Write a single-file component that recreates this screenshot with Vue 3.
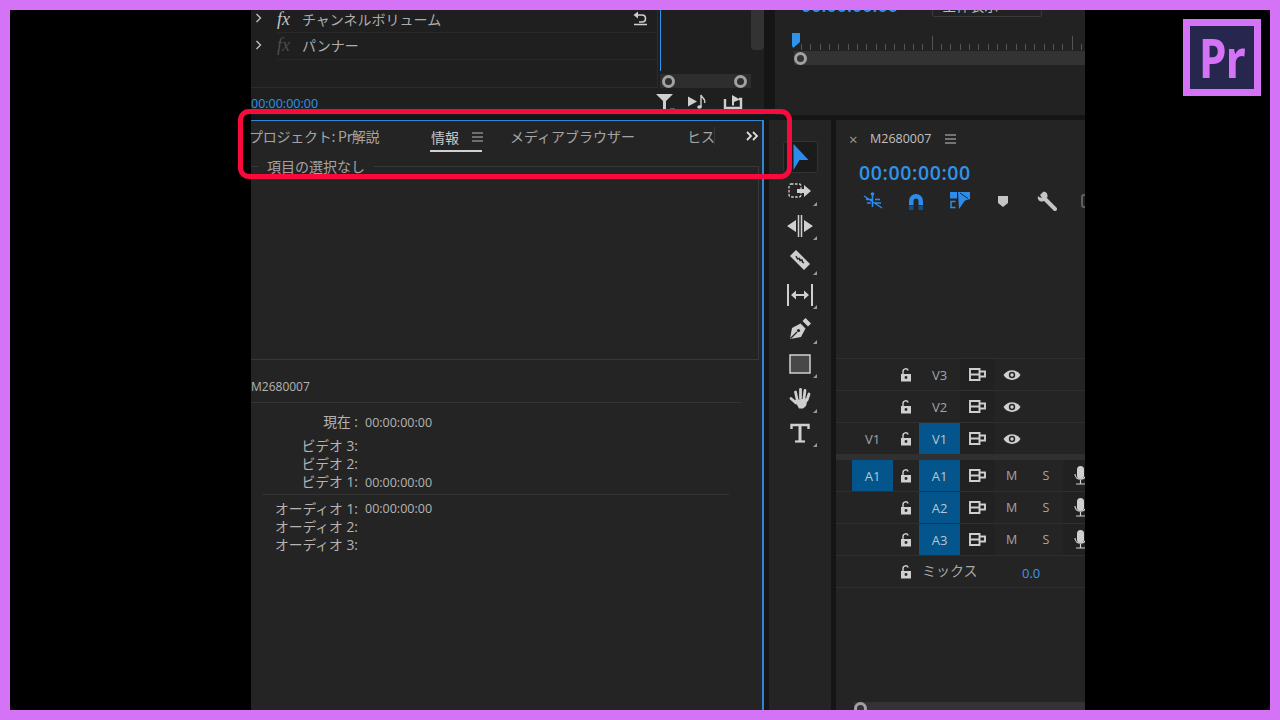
<script setup>
const fxRows = [
  { label: 'チャンネルボリューム', dim: false, reset: true },
  { label: 'パンナー', dim: true, reset: false }
]

const videoInfo = [
  { label: 'ビデオ 3:', value: '' },
  { label: 'ビデオ 2:', value: '' },
  { label: 'ビデオ 1:', value: '00:00:00:00' }
]

const audioInfo = [
  { label: 'オーディオ 1:', value: '00:00:00:00' },
  { label: 'オーディオ 2:', value: '' },
  { label: 'オーディオ 3:', value: '' }
]

const videoTracks = [
  { name: 'V3', src: '', on: false },
  { name: 'V2', src: '', on: false },
  { name: 'V1', src: 'V1', on: true }
]

const audioTracks = [
  { name: 'A1', src: 'A1', on: true },
  { name: 'A2', src: '', on: true },
  { name: 'A3', src: '', on: true }
]

const ticks = Array.from({ length: 31 }, (_, i) => i)
</script>

<template>
  <div class="frame">
    <div class="app">
      <div class="top">
        <section class="effects">
          <div class="fx-area">
            <div class="fx-list">
              <div v-for="row in fxRows" :key="row.label" class="fx-row">
                <svg class="chev" width="8" height="10" viewBox="0 0 8 10"><path d="M1.5 1l4 4-4 4" fill="none" stroke="#c4c4c4" stroke-width="1.3"/></svg>
                <span :class="['fx', { dim: row.dim }]">fx</span>
                <span class="fx-name">{{ row.label }}</span>
                <svg v-if="row.reset" class="reset" width="18" height="16" viewBox="0 0 18 16"><path d="M7 1.5L2.5 5 7 8.5z" fill="#cfcfcf"/><path d="M7 5h4c2.5 0 3.5 1.5 3.5 3.5S13 12 11 12H8" fill="none" stroke="#cfcfcf" stroke-width="1.6"/><path d="M3 14.5h13" stroke="#cfcfcf" stroke-width="1.5"/></svg>
              </div>
            </div>
            <div class="fx-graph">
              <div class="graph-body"><i class="graph-line"></i><i class="graph-scroll"></i></div>
              <div class="graph-zoom"><i class="knob"></i><i class="knob"></i></div>
            </div>
          </div>
          <div class="fx-foot">
            <span class="fx-time">00:00:00:00</span>
            <div class="foot-icons">
              <svg width="24" height="16" viewBox="0 0 24 16"><path d="M3 0h17l-7 7v8h-3V7z" fill="#cfcfcf"/><path d="M17 15h5" stroke="#9a9a9a"/></svg>
              <svg width="20" height="16" viewBox="0 0 20 16"><path d="M0 2.5l9 5-9 5z" fill="#cfcfcf"/><path d="M13 13V1c1 3.5 5 3.5 3.5 8" fill="none" stroke="#cfcfcf" stroke-width="1.4"/><ellipse cx="11.5" cy="13" rx="2.3" ry="1.8" fill="#cfcfcf"/></svg>
              <svg width="20" height="16" viewBox="0 0 20 16"><path d="M2 5v9h16V5h-2" fill="none" stroke="#cfcfcf" stroke-width="2.4"/><path d="M9 1l8 4.500-6 2.500v3.500H9z" fill="#cfcfcf"/></svg>
            </div>
          </div>
        </section>
        <section class="program">
          <div class="program-head">
            <span class="program-time">00:00:00:00</span>
            <span class="fit">全体表示</span>
          </div>
          <div class="ruler">
            <i class="playhead"></i>
            <i v-for="t in ticks" :key="t" :class="['tick', { big: t % 15 === 14 }]"></i>
          </div>
          <div class="ruler-bar"><i class="knob"></i></div>
        </section>
      </div>

      <div class="bottom">
        <section class="info-panel">
          <div class="tabs">
            <span class="tab tab-project">プロジェクト: Pr解説</span>
            <span class="tab tab-info">情報<svg class="menu" width="11" height="10" viewBox="0 0 11 10"><path d="M0 1h11M0 5h11M0 9h11" stroke="#b8b8b8"/></svg></span>
            <span class="tab tab-media">メディアブラウザー</span>
            <span class="tab tab-hist">ヒス</span>
            <svg class="more" width="14" height="10" viewBox="0 0 14 10"><path d="M2 1l4 4-4 4M8 1l4 4-4 4" fill="none" stroke="#dcdcdc" stroke-width="1.8"/></svg>
          </div>
          <fieldset class="selection"><legend>項目の選択なし</legend></fieldset>
          <div class="clip-name">M2680007</div>
          <div class="info-row now"><span>現在 :</span><span>00:00:00:00</span></div>
          <div class="info-block">
            <div v-for="row in videoInfo" :key="row.label" class="info-row"><span>{{ row.label }}</span><span>{{ row.value }}</span></div>
          </div>
          <div class="info-block audio">
            <div v-for="row in audioInfo" :key="row.label" class="info-row"><span>{{ row.label }}</span><span>{{ row.value }}</span></div>
          </div>
        </section>

        <aside class="tools">
          <div class="tool active"><svg width="18" height="27" viewBox="0 0 18 27"><path d="M2.500 0l15 16H8.500l-6 10z" fill="#2d8ceb"/></svg></div>
          <div class="tool corner"><svg width="24" height="18" viewBox="0 0 24 18"><rect x="1" y="2" width="12" height="13" rx="2" fill="none" stroke="#cfcfcf" stroke-width="1.3" stroke-dasharray="2.500 1.500"/><path d="M9 7h7V3l7 6-7 6v-4H9z" fill="#cfcfcf"/></svg></div>
          <div class="tool corner"><svg width="26" height="22" viewBox="0 0 26 22"><path d="M0 11l9-6v12zM26 11l-9-6v12z" fill="#cfcfcf"/><path d="M11.500 0v22M14.500 0v22" stroke="#cfcfcf" stroke-width="1.5"/></svg></div>
          <div class="tool corner"><svg width="20" height="20" viewBox="0 0 20 20"><path d="M0 6l6-6 14 14-6 6z" fill="#cfcfcf"/><path d="M6 6l1.500 3 2-.5.500 2 2-.5.500 2 1.500 1" fill="none" stroke="#262626" stroke-width="1.5"/></svg></div>
          <div class="tool corner"><svg width="28" height="22" viewBox="0 0 28 22"><path d="M2 0v22M26 0v22" stroke="#cfcfcf" stroke-width="2"/><path d="M5 11l5-4.500V10h8V6.500l5 4.500-5 4.500V12h-8v3.500z" fill="#cfcfcf"/></svg></div>
          <div class="tool corner"><svg width="22" height="22" viewBox="0 0 22 22"><path d="M13.500 3l3-3 5.500 5.500-3 3z" fill="#cfcfcf"/><path d="M1 21l2-11 8.500-4.500 5 5L12 19z" fill="#cfcfcf"/><path d="M1.500 20.500L8 14" stroke="#262626" stroke-width="1.3"/><circle cx="9.500" cy="12.500" r="1.600" fill="#262626"/></svg></div>
          <div class="tool corner"><svg width="22" height="20" viewBox="0 0 22 20"><rect x="1" y="1" width="20" height="18" fill="#484848" stroke="#cfcfcf" stroke-width="1.500"/></svg></div>
          <div class="tool corner"><svg width="22" height="22" viewBox="0 0 22 22"><g fill="none" stroke="#cfcfcf" stroke-width="2.800" stroke-linecap="round"><path d="M8 12L6.500 5M11.500 11V2.500M15 11l1-7.500M18 13l2-6M7 16L2 11.500"/></g><path d="M5.500 13L19 11l-2 8-3 2.500H10z" fill="#cfcfcf"/></svg></div>
          <div class="tool corner"><svg width="20" height="20" viewBox="0 0 20 20"><path d="M1.500 6V2h17v4" fill="none" stroke="#cfcfcf" stroke-width="2.400"/><path d="M10 2v16" stroke="#cfcfcf" stroke-width="3"/><path d="M5 18.500h10" stroke="#cfcfcf" stroke-width="2.200"/></svg></div>
        </aside>

        <section class="timeline">
          <div class="seq-tab">
            <span class="close">×</span>
            <span class="seq-name">M2680007</span>
            <svg width="11" height="10" viewBox="0 0 11 10"><path d="M0 1h11M0 5h11M0 9h11" stroke="#c4c4c4" stroke-width="1.2"/></svg>
          </div>
          <div class="seq-time">00:00:00:00</div>
          <div class="seq-tools">
            <svg width="20" height="18" viewBox="0 0 20 18"><circle cx="9.500" cy="2" r="1.800" fill="#2d8ceb"/><path d="M9.500 3v12M3 7.500h6M12 7.500h5M4 11h4M12 11h6M1 4l18 12" stroke="#2d8ceb" stroke-width="1.500"/></svg>
            <svg width="16" height="17" viewBox="0 0 16 17"><path d="M1 12V8a7 7 0 0 1 14 0v4h-4.500V8a2.500 2.500 0 0 0-5 0v4z" fill="#2d8ceb"/><path d="M1 12.500h4.500V17H1zM10.500 12.500H15V17h-4.500z" fill="#14507f"/></svg>
            <svg width="20" height="18" viewBox="0 0 20 18"><path d="M0 0h7v6.500H0z" fill="#2d8ceb"/><path d="M5.500 9.500H1v6h4.500" fill="none" stroke="#2d8ceb" stroke-width="1.500"/><path d="M8 0h12v7l-5 1.500L9 17z" fill="#2d8ceb"/><path d="M10 1l8 5.500" stroke="#242424"/></svg>
            <svg width="12" height="13" viewBox="0 0 12 13"><path d="M1 1h10v7l-5 4-5-4z" fill="#c4c4c4"/></svg>
            <svg width="20" height="20" viewBox="0 0 20 20"><path d="M7 7l11 11" stroke="#c4c4c4" stroke-width="4" stroke-linecap="round"/><path d="M6 1L3 4l2 3-3-1-1-1C0 9 3 11 6 10.500L10.500 6C11 3 9 0 6 1z" fill="#c4c4c4"/></svg>
            <svg width="18" height="14" viewBox="0 0 18 14"><rect x="1" y="1" width="16" height="12" rx="2" fill="none" stroke="#5e5e5e" stroke-width="2"/></svg>
          </div>
          <div class="tracks">
            <div v-for="t in videoTracks" :key="t.name" class="track">
              <span class="src">{{ t.src }}</span>
              <svg class="lock" width="14" height="14" viewBox="0 0 14 14"><path d="M4 6V3.500a2.700 2.700 0 0 1 5.200-1" fill="none" stroke="#cfcfcf" stroke-width="1.400"/><path d="M2 6h10v7.500H2z" fill="#cfcfcf"/><circle cx="7" cy="9.500" r="1.400" fill="#262626"/></svg>
              <span :class="['name', { lit: t.on }]">{{ t.name }}</span>
              <span class="cell sync"><svg width="17" height="13" viewBox="0 0 17 13"><path d="M1 1h9.500v11H1zM1 6.500h9.500M10.500 3.500H16v5h-5.500z" fill="none" stroke="#cfcfcf" stroke-width="1.900"/></svg></span>
              <span class="cell eye"><svg width="18" height="12" viewBox="0 0 18 12"><path d="M0.500 6c4-6.500 13-6.500 17 0-4 6.500-13 6.500-17 0z" fill="#cfcfcf"/><circle cx="9" cy="6" r="3.200" fill="#262626"/><circle cx="9" cy="6" r="1.700" fill="#cfcfcf"/></svg></span>
            </div>
            <div class="track-gap"></div>
            <div v-for="t in audioTracks" :key="t.name" class="track">
              <span :class="['src', { lit: t.src }]">{{ t.src }}</span>
              <svg class="lock" width="14" height="14" viewBox="0 0 14 14"><path d="M4 6V3.500a2.700 2.700 0 0 1 5.200-1" fill="none" stroke="#cfcfcf" stroke-width="1.400"/><path d="M2 6h10v7.500H2z" fill="#cfcfcf"/><circle cx="7" cy="9.500" r="1.400" fill="#262626"/></svg>
              <span :class="['name', { lit: t.on }]">{{ t.name }}</span>
              <span class="cell sync"><svg width="17" height="13" viewBox="0 0 17 13"><path d="M1 1h9.500v11H1zM1 6.500h9.500M10.500 3.500H16v5h-5.500z" fill="none" stroke="#cfcfcf" stroke-width="1.900"/></svg></span>
              <span class="cell eye letter">M</span>
              <span class="cell letter solo">S</span>
              <span class="cell mic"><svg width="13" height="19" viewBox="0 0 13 19"><rect x="3" y="0" width="7" height="13" rx="3.500" fill="#cfcfcf"/><path d="M1 8c0 7 11 7 11 0M6.500 14v4M2 18h9" fill="none" stroke="#cfcfcf" stroke-width="1.200"/></svg></span>
            </div>
            <div class="track mix">
              <span class="src"></span>
              <svg class="lock" width="14" height="14" viewBox="0 0 14 14"><path d="M4 6V3.500a2.700 2.700 0 0 1 5.200-1" fill="none" stroke="#cfcfcf" stroke-width="1.400"/><path d="M2 6h10v7.500H2z" fill="#cfcfcf"/><circle cx="7" cy="9.500" r="1.400" fill="#262626"/></svg>
              <span class="mix-name">ミックス</span>
              <span class="mix-value">0.0</span>
            </div>
          </div>
          <div class="seq-scroll"><i class="knob"></i></div>
        </section>
      </div>
    </div>

    <div class="highlight"></div>

    <div class="logo"><span>Pr</span></div>
  </div>
</template>

<style>
html, body {
  margin: 0;
  background: #000;
}
</style>

<style scoped>
.frame {
  position: relative;
  width: 1280px;
  height: 720px;
  box-sizing: border-box;
  border: 10px solid #d473f6;
  background: #000;
  overflow: hidden;
  font-family: "Open Sans", "Noto Sans CJK JP", sans-serif;
  color: #b4b4b4;
}

.app {
  width: 834px;
  height: 700px;
  margin-left: 241px;
  display: flex;
  flex-direction: column;
  gap: 5px;
  background: #151515;
}

.top {
  height: 105px;
  display: flex;
  flex: none;
  gap: 11px;
}

.effects {
  width: 513px;
  flex: none;
  background: #1f1f1f;
}

.fx-area {
  height: 78px;
  display: flex;
}

.fx-list {
  width: 406px;
  flex: none;
  border-right: 1px solid #2c2c2c;
  border-bottom: 1px solid #2c2c2c;
}

.fx-row {
  display: flex;
  align-items: center;
  box-sizing: border-box;
  height: 27px;
  padding-bottom: 2px;
  border-bottom: 1px solid #282828;
  margin-left: 26px;
  position: relative;
  font-family: "Noto Sans CJK JP", sans-serif;
  font-size: 14px;
  color: #adadad;
}

.fx-row:first-child {
  height: 23px;
  padding-bottom: 4px;
}

.chev {
  position: absolute;
  left: -22px;
  top: 7px;
}

.fx-row:first-child .chev {
  top: 3px;
}

.fx {
  width: 25px;
  font-family: "Liberation Serif", serif;
  font-style: italic;
  font-size: 18px;
  color: #c4c4c4;
}

.fx.dim {
  color: #4c4c4c;
}

.reset {
  position: absolute;
  left: 354px;
  top: 0;
}

.fx-graph {
  flex: 1;
  display: flex;
  flex-direction: column;
}

.graph-body {
  flex: 1;
  display: flex;
  justify-content: space-between;
  padding-left: 2px;
}

.graph-line {
  width: 1px;
  height: 61px;
  background: #2f93ea;
}

.graph-scroll {
  width: 13px;
  height: 40px;
  border-radius: 0 0 4px 4px;
  background: #333;
}

.graph-zoom {
  height: 14px;
  margin-right: 13px;
  margin-left: 2px;
  display: flex;
  justify-content: space-between;
  align-items: center;
  padding: 0 4px 0 2px;
  background: #2e2e2e;
}

.knob {
  display: block;
  box-sizing: border-box;
  width: 13px;
  height: 13px;
  border: 3px solid #a2a2a2;
  border-radius: 50%;
}

.fx-foot {
  height: 27px;
  display: flex;
  align-items: center;
  justify-content: space-between;
  padding-right: 21px;
}

.fx-time {
  font-size: 12.5px;
  color: #2f93ea;
  margin-top: 3px;
}

.foot-icons {
  display: flex;
  gap: 15px;
}

.foot-icons svg:first-child {
  margin-right: -4px;
}

.program {
  flex: 1;
  background: #222;
  overflow: hidden;
}

.program-head {
  height: 23px;
  margin-top: -16px;
  display: flex;
  align-items: flex-end;
  gap: 34px;
  padding-left: 26px;
}

.program-time {
  font-size: 18px;
  font-weight: 600;
  line-height: 23px;
  color: #2f93ea;
}

.fit {
  width: 110px;
  height: 23px;
  box-sizing: border-box;
  padding-left: 9px;
  border: 1px solid #3a3a3a;
  border-radius: 2px;
  font-family: "Noto Sans CJK JP", sans-serif;
  font-size: 14px;
  line-height: 21px;
  color: #bcbcbc;
}

.ruler {
  height: 34px;
  padding: 0 0 1px 26px;
  box-sizing: border-box;
  display: flex;
  align-items: flex-end;
  gap: 8.33px;
  position: relative;
}

.playhead {
  position: absolute;
  left: 17px;
  top: 16px;
  width: 8px;
  height: 15px;
  background: #2f93ea;
  clip-path: polygon(0 0, 100% 0, 100% 60%, 15% 100%, 0 85%);
}

.tick {
  width: 1px;
  height: 6px;
  flex: none;
  background: #555;
}

.tick.big {
  height: 14px;
}

.ruler-bar {
  height: 14px;
  margin-left: 19px;
  display: flex;
  align-items: center;
  background: #333;
}

.bottom {
  flex: 1;
  min-height: 0;
  display: flex;
  gap: 5px;
}

.info-panel {
  position: relative;
  width: 513px;
  flex: none;
  box-sizing: border-box;
  border-top: 1px solid #2f86d8;
  border-right: 2px solid #2f86d8;
  background: #242424;
  font-size: 12.5px;
}

.tabs {
  height: 33px;
  box-sizing: border-box;
  padding-bottom: 4px;
  display: flex;
  align-items: center;
  font-family: "Noto Sans CJK JP", sans-serif;
  font-size: 14px;
  color: #a4a4a4;
  position: relative;
}

.tab {
  flex: none;
  white-space: nowrap;
}

.tab-project {
  width: 182px;
  margin-left: -2px;
  letter-spacing: -0.25px;
}

.tab-info {
  width: 79px;
  height: 33px;
  box-sizing: border-box;
  padding-bottom: 1px;
  align-self: flex-start;
  color: #c8c8c8;
  display: flex;
  align-items: center;
  gap: 13px;
  position: relative;
}

.tab-info::after {
  content: "";
  position: absolute;
  left: -1px;
  width: 52px;
  bottom: 2px;
  height: 2px;
  background: #d0d0d0;
}

.tab-media {
  width: 177px;
}

.tab-hist {
  position: relative;
  width: 58px;
}

.tab-hist::after {
  content: "";
  position: absolute;
  left: 27px;
  top: 1px;
  width: 1px;
  height: 18px;
  background: #383838;
}

.more {
  flex: none;
}

.selection {
  box-sizing: border-box;
  width: 508px;
  height: 202px;
  margin: 4px 0 0;
  padding: 0;
  border: 1px solid #383838;
  border-left: 0;
  font-family: "Noto Sans CJK JP", sans-serif;
  font-size: 14px;
}

.selection legend {
  margin-left: 7px;
  padding: 0 9px;
  line-height: 16px;
  color: #a4a4a4;
}

.clip-name {
  width: 491px;
  height: 33px;
  margin-top: 10px;
  line-height: 34px;
  font-size: 12px;
  box-sizing: border-box;
  border-bottom: 1px solid #333;
}

.info-row {
  display: grid;
  grid-template-columns: 107px 1fr;
  column-gap: 7px;
  height: 18px;
  line-height: 18px;
}

.info-row span:first-child {
  margin-top: -1px;
  text-align: right;
  font-size: 13.8px;
  white-space: nowrap;
}

.info-row.now {
  margin-top: 11px;
}

.info-block {
  margin-top: 6px;
}

.info-block.audio {
  width: 467px;
  margin-left: 11px;
  margin-top: 2px;
  padding-top: 5px;
  border-top: 1px solid #333;
}

.info-block.audio .info-row {
  grid-template-columns: 96px 1fr;
}

.info-block.audio .info-row span:first-child {
  margin-top: 0;
}

.tools {
  width: 62px;
  flex: none;
  background: #242424;
  padding-top: 21px;
  display: flex;
  flex-direction: column;
  align-items: center;
}

.tool {
  position: relative;
  width: 35px;
  height: 34.5px;
  flex: none;
  box-sizing: border-box;
  display: flex;
  align-items: center;
  justify-content: center;
}

.tool.active {
  height: 32px;
  margin-bottom: 1px;
  border: 1px solid #333;
  border-radius: 3px;
  background: #1b1b1b;
  overflow: hidden;
}

.tool.corner::after {
  content: "";
  position: absolute;
  right: 1px;
  bottom: 3px;
  border-style: solid;
  border-width: 0 0 4px 4px;
  border-color: transparent transparent #9a9a9a transparent;
}

.timeline {
  flex: 1;
  min-width: 0;
  display: flex;
  flex-direction: column;
  background: #242424;
  overflow: hidden;
}

.seq-tab {
  height: 37px;
  flex: none;
  display: flex;
  align-items: center;
  padding-left: 13px;
  font-size: 12.5px;
  color: #c0c0c0;
}

.close {
  width: 21px;
  font-size: 15px;
  color: #9c9c9c;
}

.seq-name {
  width: 75px;
}

.seq-time {
  height: 30px;
  flex: none;
  padding-left: 23px;
  font-size: 19.5px;
  font-weight: 600;
  line-height: 32px;
  letter-spacing: 0.6px;
  color: #2f93ea;
}

.seq-tools {
  height: 28px;
  flex: none;
  display: grid;
  grid-template-columns: repeat(6, 43.5px);
  align-items: center;
  justify-items: center;
  padding-left: 15px;
}

.tracks {
  margin-top: 143px;
  flex: none;
  border-top: 1px solid #2f2f2f;
}

.track {
  height: 31px;
  display: grid;
  grid-template-columns: 16px 41px 26px 41px 34px 35px 34px 34px;
  align-items: center;
  border-bottom: 1px solid #2f2f2f;
  font-size: 13px;
  color: #a4a4a4;
}

.track-gap {
  height: 6px;
  margin-top: -1px;
  background: #303030;
}

.src {
  grid-column: 2;
  height: 100%;
  display: flex;
  align-items: center;
  justify-content: center;
}

.lit {
  background: #04558c;
  color: #b9c6d1;
}

.lock {
  grid-column: 3;
  justify-self: center;
}

.name {
  grid-column: 4;
  height: 100%;
  display: flex;
  align-items: center;
  justify-content: center;
}

.cell {
  height: 100%;
  display: flex;
  align-items: center;
  justify-content: center;
}

.sync,
.mic {
  background: #212121;
}

.letter {
  font-size: 12.5px;
}

.mix-name {
  grid-column: 4 / 6;
  padding-left: 3px;
  margin-bottom: 4px;
  font-family: "Noto Sans CJK JP", sans-serif;
  font-size: 14px;
  color: #a8a8a8;
}

.mix-value {
  grid-column: 6 / 9;
  margin-left: 28px;
  margin-top: 2px;
  font-size: 13px;
  color: #3b97ee;
}

.seq-scroll {
  margin-top: auto;
  height: 8px;
  margin-left: 18px;
  background: #333;
}

.highlight {
  position: absolute;
  left: 228px;
  top: 99px;
  width: 554px;
  height: 70px;
  box-sizing: border-box;
  border: 5px solid #f90a3c;
  border-radius: 11px;
}

.logo {
  position: absolute;
  left: 1173px;
  top: 9px;
  width: 78px;
  height: 77px;
  box-sizing: border-box;
  border: 7px solid #d473f6;
  background: #26264f;
  display: flex;
  align-items: center;
  justify-content: center;
}

.logo span {
  margin-bottom: 2px;
  font-family: "Noto Sans", sans-serif;
  font-weight: 700;
  font-size: 54px;
  line-height: 1;
  letter-spacing: -1px;
  transform: scaleX(0.82);
  color: #d473f6;
}
</style>
